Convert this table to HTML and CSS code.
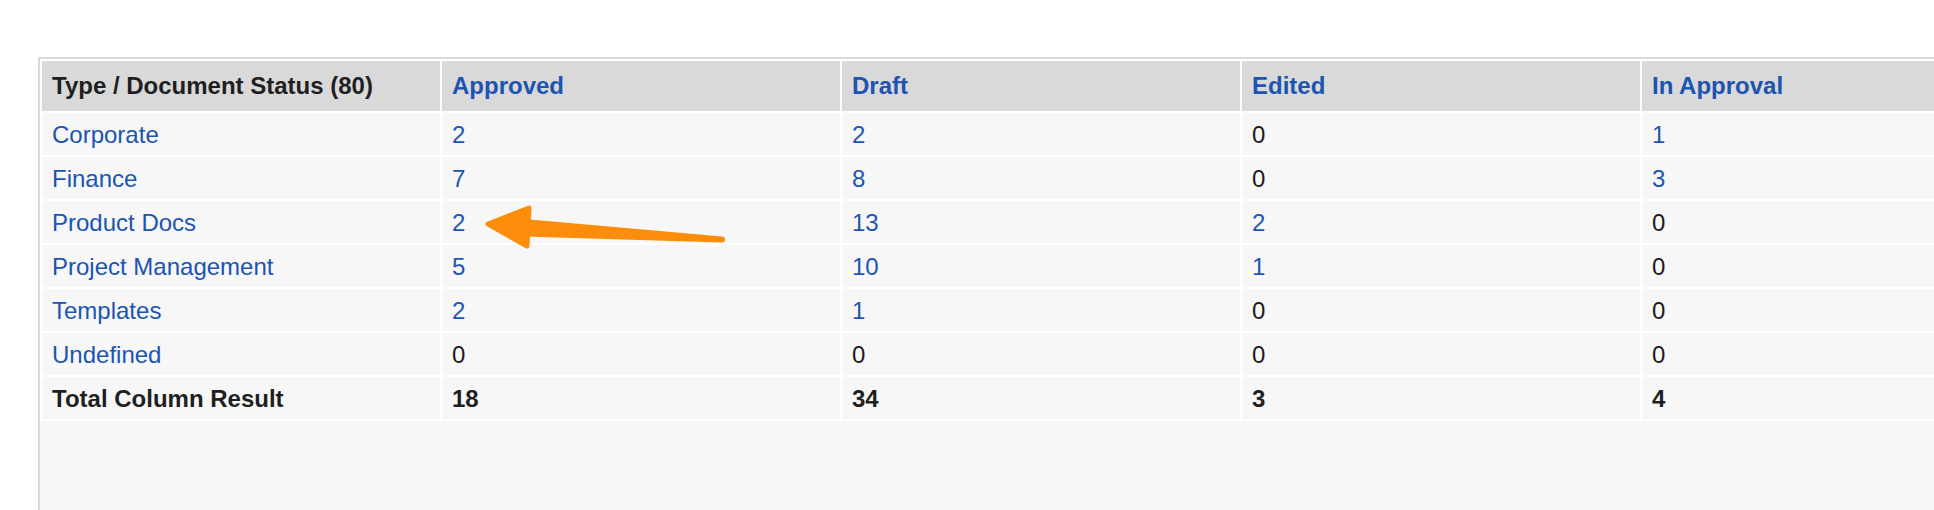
FILE: index.html
```html
<!DOCTYPE html>
<html lang="en">
<head>
<meta charset="utf-8">
<title>Document Status Report</title>
<link rel="stylesheet" href="styles.css">
</head>
<body>
<div class="page">
  <div class="report">
    <table class="status-table">
      <colgroup>
        <col class="c"><col class="c"><col class="c"><col class="c"><col class="c">
      </colgroup>
      <thead>
        <tr>
          <th class="corner">Type / Document Status (80)</th>
          <th><a href="#">Approved</a></th>
          <th><a href="#">Draft</a></th>
          <th><a href="#">Edited</a></th>
          <th><a href="#">In Approval</a></th>
        </tr>
      </thead>
      <tbody>
        <tr>
          <td><a href="#">Corporate</a></td>
          <td><a href="#">2</a></td>
          <td><a href="#">2</a></td>
          <td>0</td>
          <td><a href="#">1</a></td>
        </tr>
        <tr>
          <td><a href="#">Finance</a></td>
          <td><a href="#">7</a></td>
          <td><a href="#">8</a></td>
          <td>0</td>
          <td><a href="#">3</a></td>
        </tr>
        <tr>
          <td><a href="#">Product Docs</a></td>
          <td><a href="#">2</a></td>
          <td><a href="#">13</a></td>
          <td><a href="#">2</a></td>
          <td>0</td>
        </tr>
        <tr>
          <td><a href="#">Project Management</a></td>
          <td><a href="#">5</a></td>
          <td><a href="#">10</a></td>
          <td><a href="#">1</a></td>
          <td>0</td>
        </tr>
        <tr>
          <td><a href="#">Templates</a></td>
          <td><a href="#">2</a></td>
          <td><a href="#">1</a></td>
          <td>0</td>
          <td>0</td>
        </tr>
        <tr>
          <td><a href="#">Undefined</a></td>
          <td>0</td>
          <td>0</td>
          <td>0</td>
          <td>0</td>
        </tr>
        <tr class="total">
          <td>Total Column Result</td>
          <td>18</td>
          <td>34</td>
          <td>3</td>
          <td>4</td>
        </tr>
      </tbody>
    </table>
  </div>
</div>
<svg class="annotation" width="1934" height="510" viewBox="0 0 1934 510" aria-hidden="true">
  <polygon points="488,224 529,208 527,246" fill="#fc8d0b" stroke="#fc8d0b" stroke-width="5" stroke-linejoin="round"/>
  <path d="M524 219 L722 236.5 A3 3 0 0 1 722 242.5 L524 236.5 Z" fill="#fc8d0b"/>
</svg>
</body>
</html>
```

FILE: styles.css
```css
html, body {
  margin: 0;
  padding: 0;
  background: #ffffff;
  overflow: hidden;
}

body {
  position: relative;
  width: 1934px;
  height: 510px;
  font-family: "Liberation Sans", Arial, Helvetica, sans-serif;
  font-size: 24px;
  color: #1a1a1a;
}

.page {
  padding: 57px 0 0 38px;
}

.report {
  width: 1894px;
  height: 451px;
  overflow: hidden;
  border-left: 2px solid #d9d9d9;
  border-top: 2px solid #d9d9d9;
  background: #f7f7f7;
}

.status-table {
  border-collapse: separate;
  border-spacing: 2px;
  background: #ffffff;
  table-layout: fixed;
  width: 2002px;
}

.status-table col.c {
  width: 398px;
}

.status-table th,
.status-table td {
  text-align: left;
  vertical-align: middle;
  white-space: nowrap;
  overflow: hidden;
}

.status-table th {
  height: 49px;
  padding: 0 10px 1px;
  background: #d9d9d9;
  font-weight: bold;
  color: #1f1f1f;
}

.status-table td {
  height: 40px;
  padding: 2px 10px 0;
  background: #f7f7f7;
  font-weight: normal;
}

.status-table a {
  color: #1c54b2;
  text-decoration: none;
}

.status-table tr.total td {
  font-weight: bold;
  color: #1f1f1f;
}

.annotation {
  position: absolute;
  left: 0;
  top: 0;
  pointer-events: none;
}
```
